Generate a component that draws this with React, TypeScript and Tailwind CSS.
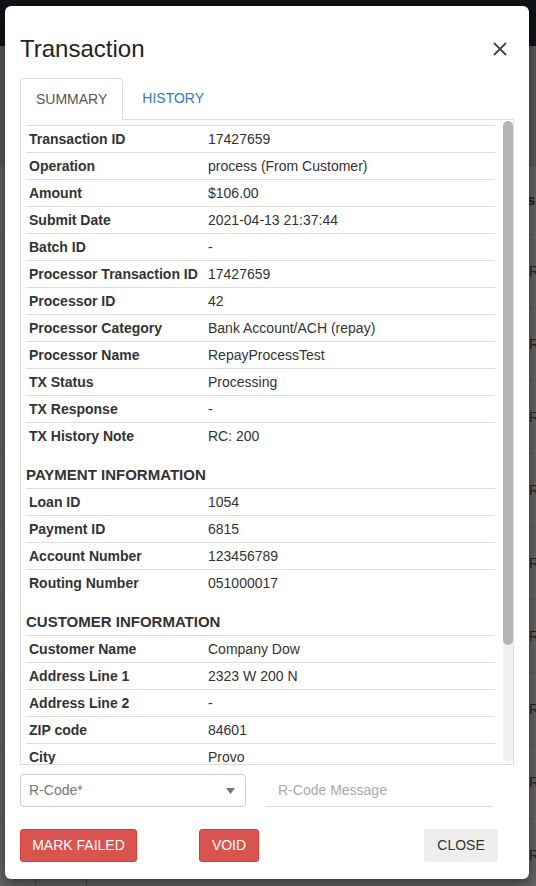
import React from 'react';

// ── data ─────────────────────────────────────────────────────────────────────

const summaryRows: [string, string][] = [
    ['Transaction ID', '17427659'],
    ['Operation', 'process (From Customer)'],
    ['Amount', '$106.00'],
    ['Submit Date', '2021-04-13 21:37:44'],
    ['Batch ID', '-'],
    ['Processor Transaction ID', '17427659'],
    ['Processor ID', '42'],
    ['Processor Category', 'Bank Account/ACH (repay)'],
    ['Processor Name', 'RepayProcessTest'],
    ['TX Status', 'Processing'],
    ['TX Response', '-'],
    ['TX History Note', 'RC: 200'],
];

const paymentRows: [string, string][] = [
    ['Loan ID', '1054'],
    ['Payment ID', '6815'],
    ['Account Number', '123456789'],
    ['Routing Number', '051000017'],
];

const customerRows: [string, string][] = [
    ['Customer Name', 'Company Dow'],
    ['Address Line 1', '2323 W 200 N'],
    ['Address Line 2', '-'],
    ['ZIP code', '84601'],
    ['City', 'Provo'],
];

// ── pieces ───────────────────────────────────────────────────────────────────

function InfoTable({ rows }: { rows: [string, string][] }) {
    return (
        <div>
            {rows.map(([label, value]) => (
                <div key={label} className="flex h-[27px] items-center border-t border-[#ddd]">
                    <div className="w-[179px] shrink-0 pl-[3px] font-bold text-[#333]">{label}</div>
                    <div className="pl-[3px] text-[#333]">{value}</div>
                </div>
            ))}
        </div>
    );
}

function SectionTitle({ children }: { children: React.ReactNode }) {
    return (
        <div className="mt-[16px] mb-[3px] text-[15px] leading-[20px] font-bold text-[#333]">{children}</div>
    );
}

// backdrop page (dimmed by the overlay)
function BackdropPage() {
    const rows = Array.from({ length: 9 });
    return (
        <div className="flex h-[886px] w-full flex-col overflow-hidden bg-[#666]">
            <div className="h-[46px] shrink-0 bg-[#101317]" />
            <div className="h-[121px] shrink-0 bg-[#5b5b5b]" />
            <div className="flex h-[67px] shrink-0 items-center justify-end pr-[1px] text-[14px] font-bold text-[#1e1e1e]">s</div>
            {rows.map((_, i) => (
                <div key={i} className="flex h-[73px] shrink-0 items-center justify-end border-t border-[#5c5c5c] text-[14px] text-[#262626]">
                    <span className="w-[7px] overflow-hidden">R</span>
                </div>
            ))}
        </div>
    );
}

// ── app ──────────────────────────────────────────────────────────────────────

export default function App() {
    return (
        <div className="relative h-[886px] w-[536px] overflow-hidden text-[14px] font-['Liberation_Sans',Arial,sans-serif]">
            <BackdropPage />

            {/* bits of the page peeking out under the modal */}
            <div className="absolute left-[35px] top-[867px] h-[30px] w-[52px] rounded-[4px] border border-[#4a4a4a]" />

            {/* Modal */}
            <div className="absolute left-[5px] top-[6px] flex h-[873px] w-[524px] flex-col rounded-[6px] bg-white px-[15px] shadow-[0_5px_15px_rgba(0,0,0,0.5)]">
                {/* Header */}
                <div className="flex items-center justify-between pt-[29px]">
                    <h2 className="text-[24px] leading-[28px] text-[#222]">Transaction</h2>
                    <button className="mr-[7px] text-[#444]">
                        <svg width="14" height="14" viewBox="0 0 14 14" fill="none" stroke="currentColor" strokeWidth="1.8">
                            <path d="M1 1L13 13M13 1L1 13" />
                        </svg>
                    </button>
                </div>

                {/* Tabs */}
                <div className="mt-[15px] flex h-[42px] border-b border-[#ddd]">
                    <div className="-mb-px flex items-center rounded-t-[4px] border border-b-0 border-[#ddd] bg-white px-[15px] text-[#555]">
                        SUMMARY
                    </div>
                    <div className="ml-[4px] flex items-center px-[15px] text-[#337ab7]">HISTORY</div>
                </div>

                {/* Panel */}
                <div className="relative h-[645px] overflow-hidden border-x border-b border-[#ddd] pl-[5px] pr-[18px] pt-[5px]">
                    <InfoTable rows={summaryRows} />
                    <SectionTitle>PAYMENT INFORMATION</SectionTitle>
                    <InfoTable rows={paymentRows} />
                    <SectionTitle>CUSTOMER INFORMATION</SectionTitle>
                    <InfoTable rows={customerRows} />

                    {/* scrollbar */}
                    <div className="absolute right-0 top-[1px] bottom-[2px] w-[10px] rounded-full bg-[#f1f1f1]">
                        <div className="h-[524px] w-full rounded-full bg-[#b4b4b4]" />
                    </div>
                </div>

                {/* R-Code fields */}
                <div className="mt-[9px] flex">
                    <div className="flex h-[33px] w-[226px] items-center justify-between rounded-[4px] border border-[#ccc] pl-[8px] pr-[10px] text-[#777]">
                        <span>R-Code*</span>
                        <svg width="9" height="6" viewBox="0 0 9 6" className="text-[#777]">
                            <path d="M0 0H9L4.5 6Z" fill="currentColor" />
                        </svg>
                    </div>
                    <div className="ml-[20px] flex h-[33px] w-[227px] items-center border-b border-[#ddd] pl-[12px] text-[#aaa]">
                        R-Code Message
                    </div>
                </div>

                {/* Actions */}
                <div className="mt-[22px] flex">
                    <button className="h-[33px] w-[117px] rounded-[3px] border border-[#d43f3a] bg-[#d9534f] text-white">
                        MARK FAILED
                    </button>
                    <button className="ml-[62px] h-[33px] w-[60px] rounded-[3px] border border-[#d43f3a] bg-[#d9534f] text-white">
                        VOID
                    </button>
                    <button className="ml-auto mr-[16px] h-[33px] w-[74px] rounded-[3px] bg-[#eee] text-[#333]">
                        CLOSE
                    </button>
                </div>
            </div>
        </div>
    );
}
